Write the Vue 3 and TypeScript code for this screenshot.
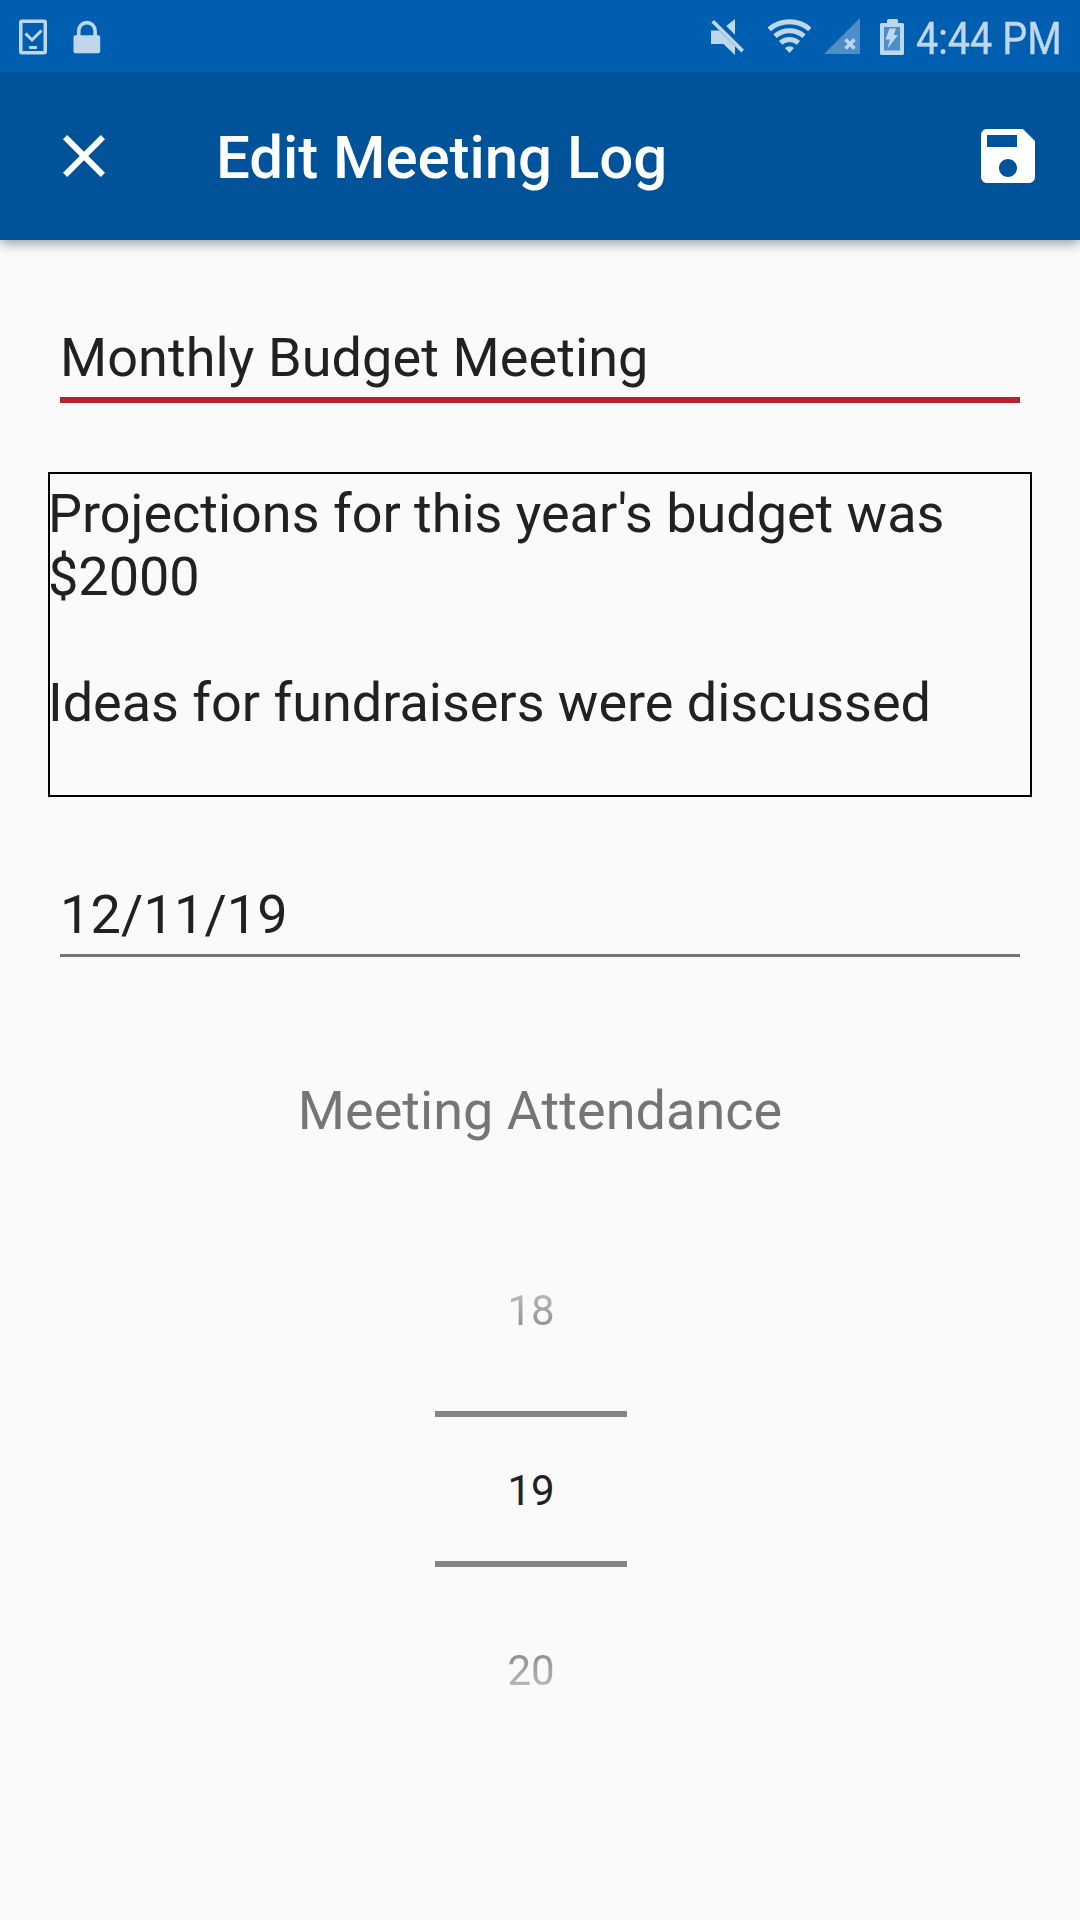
<script setup lang="ts">
import { ref, computed } from 'vue'

const title = ref('Monthly Budget Meeting')
const notes = ref("Projections for this year's budget was $2000\n\nIdeas for fundraisers were discussed")
const date = ref('12/11/19')
const attendance = ref(19)
const previous = computed(() => attendance.value - 1)
const next = computed(() => attendance.value + 1)
</script>

<template>
  <div class="screen">
    <div class="status-bar">
      <svg class="status-left" width="120" height="72" viewBox="0 0 120 72">
        <rect x="20.75" y="21.25" width="24.5" height="31.5" rx="1.2" fill="none" stroke="#bfd7ec" stroke-width="3.5" />
        <path d="M25.5 33.5l6.500 6.500 9.500-9.500" fill="none" stroke="#bfd7ec" stroke-width="3" />
        <rect x="29" y="46" width="8" height="3" rx="1" fill="#bfd7ec" />
        <path d="M78.700 36v-5.200a8.200 8.200 0 0 1 16.400 0V36" fill="none" stroke="#bfd7ec" stroke-width="3.6" />
        <rect x="73.5" y="35.3" width="26.7" height="18" rx="2" fill="#bfd7ec" />
      </svg>
      <div class="status-right">
        <svg width="217" height="72" viewBox="700 0 217 72">
          <g fill="#bfd7ec">
            <path d="M711 30.500h8.300L735 46.200V55L723.500 44H711z" />
            <path d="M735 19v15.700L726.200 26z" />
            <path d="M714.100 19.900l29.900 29.800-2.700 2.700-29.900-29.800z" />
            <path d="M789.500 53l-4.600-4.900a6.800 6.800 0 0 1 9.200 0z" />
          </g>
          <g fill="none" stroke="#bfd7ec" stroke-width="5">
            <path d="M769.200 29.300a31.400 31.400 0 0 1 40.600 0" />
            <path d="M775 36.200a22.400 22.400 0 0 1 29 0" />
            <path d="M780.600 42.900a13.500 13.500 0 0 1 17.800 0" />
          </g>
          <path d="M824 54h36V18z" fill="#4d8ec8" />
          <path d="M845.500 39.500l9 9m0-9l-9 9" stroke="#bfd7ec" stroke-width="3.4" />
          <path
            d="M887 23v-2.500q0-1.500 1.500-1.500h8q1.500 0 1.500 1.500V23h4.500q1.500 0 1.500 1.500v29q0 1.500-1.500 1.500h-21q-1.500 0-1.500-1.500v-29q0-1.500 1.500-1.500z"
            fill="#bfd7ec"
          />
          <path d="M884 27h16v23.500h-16z" fill="#4d8ec8" />
          <path d="M889.500 28.500h6.500l-2.200 6.500h4.200l-10.700 14 2.700-9.500h-4.500z" fill="#bfd7ec" />
        </svg>
        <span class="clock">4:44 PM</span>
      </div>
    </div>

    <header class="app-bar">
      <button class="icon-button" aria-label="Close">
        <svg width="72" height="72" viewBox="0 0 24 24">
          <path fill="#fff" d="M19 6.410L17.590 5 12 10.590 6.410 5 5 6.410 10.590 12 5 17.590 6.410 19 12 13.410 17.590 19 19 17.590 13.410 12z" />
        </svg>
      </button>
      <h1>Edit Meeting Log</h1>
      <button class="icon-button" aria-label="Save">
        <svg width="72" height="72" viewBox="0 0 24 24">
          <path
            fill="#fff"
            d="M17 3H5c-1.110 0-2 .9-2 2v14c0 1.100.89 2 2 2h14c1.100 0 2-.9 2-2V7l-4-4zm-5 16c-1.660 0-3-1.340-3-3s1.340-3 3-3 3 1.340 3 3-1.340 3-3 3zm3-10H5V5h10v4z"
          />
        </svg>
      </button>
    </header>

    <main class="form">
      <input v-model="title" class="field focused" type="text" />
      <textarea v-model="notes" class="notes" spellcheck="false"></textarea>
      <input v-model="date" class="field date" type="text" />
      <div class="label">Meeting Attendance</div>
      <div class="picker">
        <div class="value before">{{ previous }}</div>
        <div class="value current">{{ attendance }}</div>
        <div class="value after">{{ next }}</div>
      </div>
    </main>
  </div>
</template>

<style>
body {
  margin: 0;
  background: #fafafa;
}
</style>

<style scoped>
.screen {
  width: 1080px;
  height: 1920px;
  overflow: hidden;
  display: flex;
  flex-direction: column;
  background: #fafafa;
  color: #212121;
  font-family: Roboto, sans-serif;
}
.status-bar {
  position: relative;
  z-index: 1;
  flex: none;
  height: 72px;
  display: flex;
  justify-content: space-between;
  background: #005eb1;
}
.status-right {
  display: flex;
  width: 380px;
}
.status-right svg {
  flex: none;
}
.clock {
  margin-left: -1px;
  color: #bfd7ec;
  font-size: 45px;
  line-height: 53px;
  padding-top: 12px;
  white-space: nowrap;
  transform: scaleX(0.88);
  transform-origin: 0 0;
  -webkit-text-stroke: 0.4px #bfd7ec;
}
.app-bar {
  flex: none;
  height: 168px;
  box-sizing: border-box;
  padding: 0 36px 0 48px;
  display: flex;
  align-items: center;
  background: #005299;
  box-shadow: 0 3px 12px rgba(0, 0, 0, 0.4);
}
.icon-button {
  flex: none;
  width: 72px;
  height: 72px;
  padding: 0;
  border: 0;
  background: none;
}
.icon-button svg {
  display: block;
}
h1 {
  flex: 1;
  margin: 0 0 0 96px;
  padding-top: 4px;
  color: #fff;
  font-size: 60px;
  line-height: 70px;
  font-weight: 500;
  letter-spacing: -0.06px;
}
.form {
  display: flex;
  flex-direction: column;
  padding: 86px 48px 0;
}
input,
textarea {
  display: block;
  box-sizing: border-box;
  margin: 0;
  border: 0;
  border-radius: 0;
  outline: 0;
  background: transparent;
  color: inherit;
  font: 54px/63px Roboto, sans-serif;
}
.field {
  height: 77px;
  margin: 0 12px;
  padding: 0 0 8px;
  border-bottom: 6px solid #b5242e;
  letter-spacing: 0.09px;
}
.notes {
  height: 325px;
  margin-top: 69px;
  padding: 10px 0 0;
  box-shadow: inset 0 0 0 2px #000;
  resize: none;
  overflow: hidden;
  letter-spacing: -0.02px;
}
.date {
  height: 74px;
  margin-top: 86px;
  border-bottom: 3px solid #757575;
  letter-spacing: 0.15px;
}
.label {
  margin-top: 122px;
  font-size: 54px;
  line-height: 63px;
  text-align: center;
  color: #757575;
  letter-spacing: 0.03px;
}
.picker {
  width: 192px;
  margin: 119px 0 0 387px;
  display: flex;
  flex-direction: column;
  font-size: 42px;
  line-height: 49px;
  text-align: center;
}
.value {
  box-sizing: border-box;
}
.before,
.after {
  height: 150px;
  padding-top: 25px;
  color: transparent;
  background-clip: text;
  -webkit-background-clip: text;
}
.before {
  background-image: linear-gradient(#bdbdbd 30px, #8c8c8c 70px);
}
.current {
  height: 156px;
  padding-top: 49px;
  border-top: 6px solid #858585;
  border-bottom: 6px solid #858585;
}
.after {
  padding-top: 79px;
  background-image: linear-gradient(#8c8c8c 84px, #bdbdbd 124px);
}
</style>
